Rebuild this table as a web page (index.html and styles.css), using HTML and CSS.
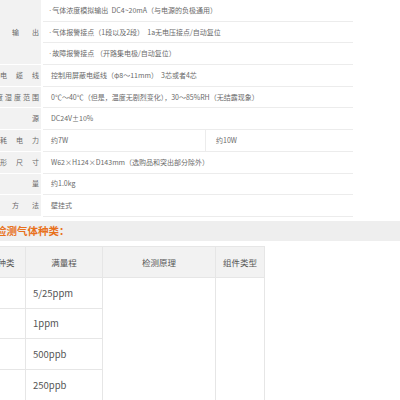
FILE: index.html
```html
<!DOCTYPE html>
<html>
<head>
  <meta charset="utf-8">
  <title>规格参数</title>
  <link rel="stylesheet" href="styles.css">
</head>
<body>
  <table class="spec">
    <colgroup>
      <col class="c-lbl">
      <col class="c-v1">
      <col class="c-v2">
    </colgroup>
    <tr>
      <td class="lbl" rowspan="3"><span class="j20">信号输出</span></td>
      <td class="val dotted" colspan="2"><span class="dot">·</span>气体浓度模拟输出&nbsp; DC4~20mA（与电源的负极通用）</td>
    </tr>
    <tr>
      <td class="val dotted" colspan="2"><span class="dot">·</span>气体报警接点（1段以及2段）&nbsp; 1a无电压接点/自动复位</td>
    </tr>
    <tr>
      <td class="val dotted" colspan="2"><span class="dot">·</span>故障报警接点 （开路集电极/自动复位）</td>
    </tr>
    <tr>
      <td class="lbl"><span class="j16">适电缆线</span></td>
      <td class="val" colspan="2">控制用屏蔽电缆线（φ8～11mm）&nbsp; 3芯或者4芯</td>
    </tr>
    <tr>
      <td class="lbl"><span class="j9">温度湿度范围</span></td>
      <td class="val" colspan="2">0℃～40℃（但是，温度无剧烈变化），30～85%RH（无结露现象）</td>
    </tr>
    <tr>
      <td class="lbl"><span class="j16">电源</span></td>
      <td class="val" colspan="2">DC24V±10%</td>
    </tr>
    <tr>
      <td class="lbl"><span class="j16">消耗电力</span></td>
      <td class="val">约7W</td>
      <td class="val split">约10W</td>
    </tr>
    <tr>
      <td class="lbl"><span class="j16">外形尺寸</span></td>
      <td class="val" colspan="2">W62×H124×D143mm（选购品和突出部分除外）</td>
    </tr>
    <tr>
      <td class="lbl"><span class="j16">重量</span></td>
      <td class="val" colspan="2">约1.0kg</td>
    </tr>
    <tr>
      <td class="lbl"><span class="j20">安装方法</span></td>
      <td class="val" colspan="2">壁挂式</td>
    </tr>
  </table>

  <h2 class="section-title">检测气体种类：</h2>

  <table class="gas">
    <colgroup>
      <col class="g1">
      <col class="g2">
      <col class="g3">
      <col class="g4">
    </colgroup>
    <tr class="head">
      <th>气体种类</th>
      <th>满量程</th>
      <th>检测原理</th>
      <th>组件类型</th>
    </tr>
    <tr class="row">
      <td></td>
      <td class="range">5/25ppm</td>
      <td rowspan="4"></td>
      <td rowspan="4"></td>
    </tr>
    <tr class="row">
      <td></td>
      <td class="range">1ppm</td>
    </tr>
    <tr class="row">
      <td></td>
      <td class="range">500ppb</td>
    </tr>
    <tr class="row">
      <td></td>
      <td class="range">250ppb</td>
    </tr>
  </table>
</body>
</html>
```

FILE: styles.css
```css
body {
  margin: 0;
  background: #fff;
  font-family: "Noto Sans CJK SC", "Noto Sans", sans-serif;
  color: #6a6a6a;
  overflow: hidden;
}

/* spec table */
.spec {
  margin-left: -30px;
  border-collapse: separate;
  border-spacing: 0;
  table-layout: fixed;
  width: 383px;
  font-size: 7px;
  line-height: 1;
}

.c-lbl { width: 73px; }
.c-v1 { width: 162px; }
.c-v2 { width: 148px; }

.spec tr {
  height: 21.7px;
}

.spec td {
  padding: 0;
  vertical-align: middle;
}

.lbl {
  background: #f2f2f2;
  border-bottom: 1px solid #fff;
  border-right: 2px solid #fff;
  text-align: right;
  padding-right: 2px !important;
  white-space: nowrap;
}

.lbl span {
  display: inline-block;
  text-align: justify;
  text-align-last: justify;
}

.j16 { width: 55px; }
.j20 { width: 67px; }
.j9 { width: 52px; }

.val {
  border-bottom: 1px solid #ececec;
  padding-left: 8px !important;
  white-space: nowrap;
}

.val.dotted {
  padding-left: 6px !important;
}

.dot {
  font-family: "Liberation Sans", sans-serif;
  margin-right: 1px;
}

.val.split {
  border-left: 1px solid #ececec;
  padding-left: 10px !important;
}

/* section heading */
.section-title {
  margin: 4px 0 0;
  height: 20px;
  line-height: 20px;
  background: #eeeeee;
  color: #e8711c;
  font-size: 10.5px;
  font-weight: bold;
  text-indent: -4px;
}

/* gas table */
.gas {
  margin-top: 5px;
  margin-left: -31px;
  border-collapse: collapse;
  table-layout: fixed;
  width: 295px;
  color: #555;
}

.g1 { width: 56px; }
.g2 { width: 77px; }
.g3 { width: 113px; }
.g4 { width: 49px; }

.gas th,
.gas td {
  border: 1px solid #e6e6e6;
  padding: 0;
}

.gas .head {
  height: 31px;
}

.gas th {
  background: #f2f2f2;
  font-weight: normal;
  font-size: 8.5px;
  text-align: center;
}

.gas .row {
  height: 30.7px;
}

.gas .range {
  font-size: 9.5px;
  padding-left: 7px;
}
```
